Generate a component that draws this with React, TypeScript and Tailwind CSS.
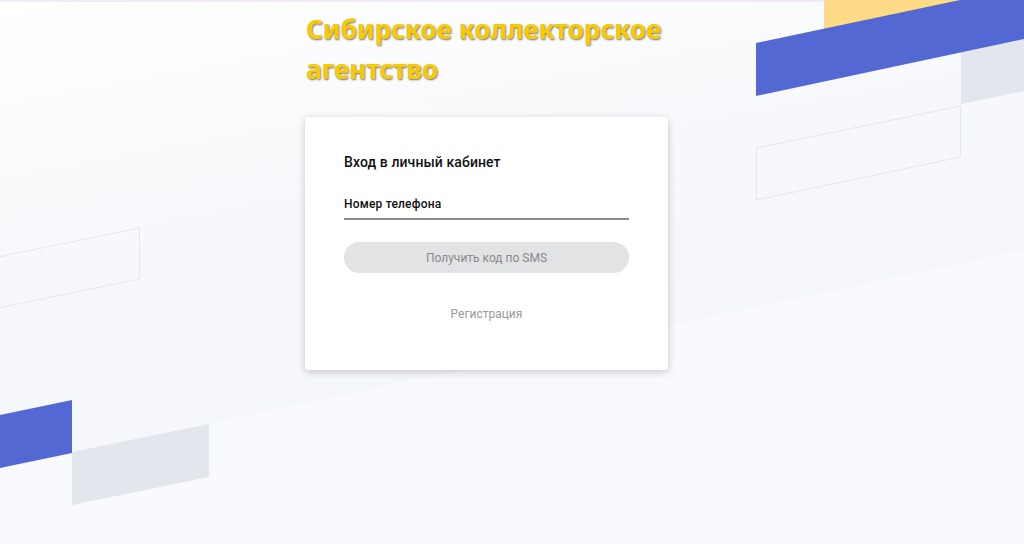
import React from "react";

function Background() {
  return (
    <svg
      className="absolute inset-0 h-full w-full"
      viewBox="0 0 1024 544"
      preserveAspectRatio="none"
      aria-hidden="true"
    >
      <defs>
        <linearGradient id="bg" x1="0" y1="0" x2="0.35" y2="1">
          <stop offset="0" stopColor="#ffffff" />
          <stop offset="0.45" stopColor="#f6f8fb" />
          <stop offset="1" stopColor="#f4f7fb" />
        </linearGradient>
      </defs>
      <rect x="0" y="0" width="1024" height="544" fill="url(#bg)" />
      <polygon points="0,468 1024,250 1024,544 0,544" fill="#f9fafd" />
      <rect x="0" y="0" width="1024" height="2" fill="#f3eaf7" />
      <polygon points="824,0 960,0 960,30 824,30" fill="#fddb87" />
      <polygon points="961,30 1024,16 1024,91 961,104" fill="#e3e6ed" />
      <polygon points="756,43 960,0 1024,0 1024,39 756,96" fill="#5468d4" />
      <polygon
        points="756.5,148 960.5,106 960.5,157 756.5,200"
        fill="none"
        stroke="#e4e7ec"
        strokeWidth="1"
      />
      <polygon
        points="-2,257 139.5,228 139.5,279 -2,308"
        fill="none"
        stroke="#e4e7ec"
        strokeWidth="1"
      />
      <polygon points="0,415 72,400 72,453 0,468" fill="#5468d4" />
      <polygon points="72,452 209,424 209,477 72,505" fill="#e3e6ed" />
    </svg>
  );
}

export default function App() {
  return (
    <div
      className="relative h-[544px] w-full overflow-hidden"
      style={{ fontFamily: "Roboto, 'Noto Sans', sans-serif" }}
    >
      <Background />
      <div className="relative flex flex-col pl-[305px]">
        <h1
          className="mt-[9px] ml-[1px] text-[26px] font-bold leading-[40px] tracking-[0.1px] text-[#f8cb00]"
          style={{
            fontFamily: "'Noto Sans', 'Open Sans', sans-serif",
            textShadow: "1px 1px 2px rgba(0,0,0,0.55)",
          }}
        >
          Сибирское коллекторское
          <br />
          агентство
        </h1>
        <div className="mt-[28px] flex h-[253px] w-[363px] flex-col rounded-[3px] bg-white px-[39px] pt-[36px] shadow-[0_2px_8px_rgba(0,0,0,0.2)]">
          <div className="text-[14px] font-medium leading-[19px] tracking-[0.1px] text-[#111]">
            Вход в личный кабинет
          </div>
          <div className="mt-[24px] border-b-2 border-[#8a8a8a] pb-[5px] text-[12px] font-medium leading-[17px] tracking-[0.2px] text-[#111]">
            Номер телефона
          </div>
          <button className="mt-[22px] flex h-[31px] w-full items-center justify-center rounded-full bg-[#e2e3e5] text-[12px] text-[#8a8a8a]">
            Получить код по SMS
          </button>
          <div className="mt-[33px] text-center text-[12px] leading-[17px] text-[#9a9a9a]">
            Регистрация
          </div>
        </div>
      </div>
    </div>
  );
}
